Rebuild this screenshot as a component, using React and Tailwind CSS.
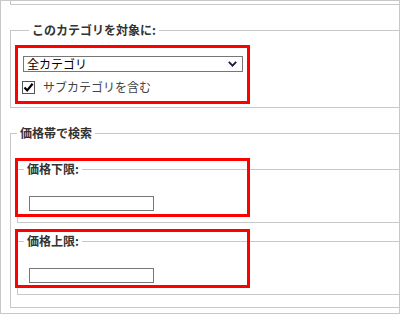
import React from "react";

const font = { fontFamily: '"Noto Sans CJK JP", "Noto Sans", sans-serif' };

function Legend({ children }) {
  return (
    <legend className="ml-[6px] px-[3px] text-[12px] leading-4 font-bold text-[#333]">
      {children}
    </legend>
  );
}

function PriceField({ label }) {
  return (
    <fieldset className="border border-[#c8c8c8] ml-[6px] -mr-[40px] pb-[11px]">
      <Legend>{label}</Legend>
      <input
        type="text"
        className="block mt-[19px] ml-[11px] w-[125px] h-[15px] border border-[#777] bg-white outline-none"
      />
    </fieldset>
  );
}

export default function App() {
  return (
    <div
      className="relative w-[400px] h-[314px] border border-[#c8c8c8] overflow-hidden bg-white"
      style={font}
    >
      {/* end of the previous block, cut off at the top */}
      <div className="ml-[9px] -mr-[40px] h-[4px] border-l border-b border-[#c8c8c8]" />

      {/* category target */}
      <fieldset className="mt-[17px] ml-[9px] -mr-[40px] border border-[#c8c8c8] pl-[12px] pb-[12px]">
        <Legend>このカテゴリを対象に:</Legend>
        <div className="relative mt-[18px] w-[220px] h-[16px] border border-[#777] bg-white flex items-center pl-[3px] text-[12px] leading-none text-black">
          全カテゴリ
          <svg
            className="absolute right-[5px] top-[4px]"
            width="9"
            height="6"
            viewBox="0 0 9 6"
          >
            <path d="M0.8 0.8 L4.5 4.6 L8.2 0.8" fill="none" stroke="#1a1a3a" strokeWidth="1.8" />
          </svg>
        </div>
        <label className="flex items-center mt-[7px] -ml-[1px]">
          <span className="w-[13px] h-[13px] border border-[#555] bg-white flex items-center justify-center">
            <svg width="11" height="11" viewBox="0 0 11 11">
              <path d="M1.5 5.5 L4.2 8.4 L9.6 1.8" fill="none" stroke="#000" strokeWidth="2.2" />
            </svg>
          </span>
          <span className="ml-[8px] text-[12px] leading-4 text-[#444]">サブカテゴリを含む</span>
        </label>
      </fieldset>

      {/* price range */}
      <fieldset className="mt-[17px] ml-[9px] -mr-[40px] border border-[#c8c8c8] pb-[12px]">
        <Legend>価格帯で検索</Legend>
        <div className="mt-[20px]">
          <PriceField label="価格下限:" />
        </div>
        <div className="mt-[10px]">
          <PriceField label="価格上限:" />
        </div>
      </fieldset>

      {/* highlight boxes */}
      <div className="absolute left-[14px] top-[44px] w-[235px] h-[59px] border-[3px] border-[#ff0000]" />
      <div className="absolute left-[14px] top-[157px] w-[235px] h-[59px] border-[3px] border-[#ff0000]" />
      <div className="absolute left-[14px] top-[228px] w-[235px] h-[59px] border-[3px] border-[#ff0000]" />
    </div>
  );
}
